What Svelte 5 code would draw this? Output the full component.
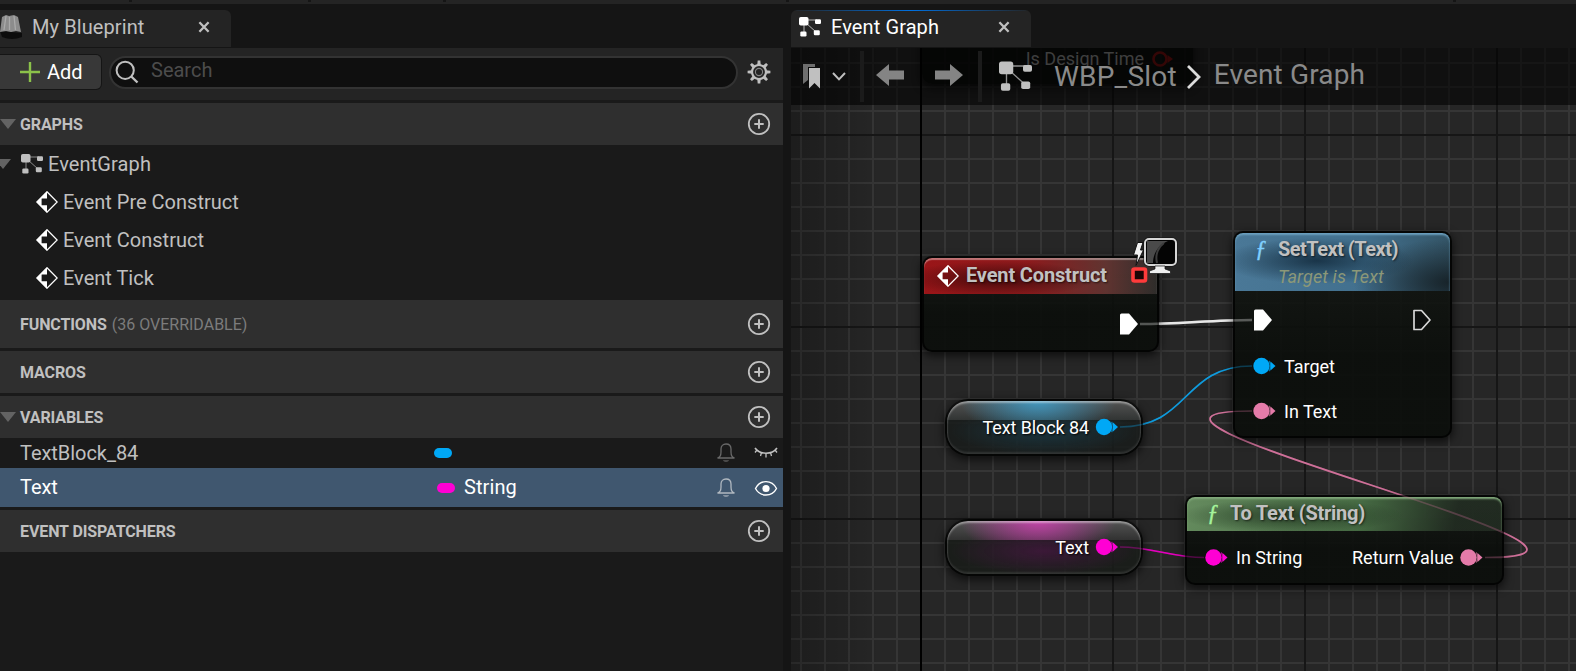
<script lang="ts">
	type Pin = { x: number; y: number; color: string };
	type Node = {
		kind: string;
		x: number;
		y: number;
		w: number;
		h: number;
		title: string;
		subtitle?: string;
	};

	// top left corner of the visible part of the graph
	const originX = 791;
	const originY = 48;

	const events = ['Event Pre Construct', 'Event Construct', 'Event Tick'];

	const nodes: Node[] = [
		{ kind: 'event', x: 922, y: 256, w: 237, h: 96, title: 'Event Construct' },
		{ kind: 'call', x: 1233, y: 231, w: 219, h: 207, title: 'SetText (Text)', subtitle: 'Target is Text' },
		{ kind: 'pure', x: 1185, y: 495, w: 319, h: 90, title: 'To Text (String)' }
	];

	const getters = [
		{ kind: 'object', x: 945, y: 399, title: 'Text Block 84' },
		{ kind: 'string', x: 945, y: 519, title: 'Text' }
	];

	const pins: Pin[] = [
		{ x: 1261.5, y: 366, color: '#00a8f6' },
		{ x: 1261.5, y: 411, color: '#e57ba9' },
		{ x: 1104, y: 427, color: '#00a8f6' },
		{ x: 1104, y: 547, color: '#ff00d4' },
		{ x: 1213.5, y: 557.5, color: '#ff00d4' },
		{ x: 1468.5, y: 557.5, color: '#e57ba9' }
	];

	const labels = [
		{ x: 1284, y: 367, text: 'Target' },
		{ x: 1284, y: 412, text: 'In Text' },
		{ x: 1236, y: 558, text: 'In String' },
		{ x: 1352, y: 558, text: 'Return Value' }
	];

	const place = (x: number, y: number) => `left: ${x - originX}px; top: ${y - originY}px;`;
</script>

{#snippet graphIcon(size: number)}
	<svg class="icon" width={size} height={size} viewBox="0 0 22 22">
		<path d="M5 4H18M5 5V18M7 7L17 16" fill="none" stroke="currentColor" stroke-width="0.9" opacity="0.75" />
		<rect x="0" y="1" width="9.5" height="8.5" rx="1.8" fill="currentColor" />
		<rect x="16" y="3.3" width="6" height="4.6" rx="1.2" fill="currentColor" />
		<rect x="1.3" y="15.5" width="6.2" height="5" rx="1.2" fill="currentColor" />
		<rect x="14.8" y="14.3" width="6" height="5" rx="1.2" fill="currentColor" />
	</svg>
{/snippet}

{#snippet eventIcon()}
	<svg class="icon" width="22" height="22" viewBox="0 0 22 22">
		<path d="M11 .8L21.2 11L11 21.2L.8 11Z" fill="none" stroke="#fff" stroke-width="1.3" />
		<path d="M11 .5V7.6H5.6V14.2H11V21.5L.5 11Z" fill="#fff" />
	</svg>
{/snippet}

{#snippet addIcon()}
	<svg class="icon" width="24" height="24" viewBox="0 0 24 24">
		<circle cx="12" cy="12" r="10.2" fill="none" stroke="#c0c0c0" stroke-width="1.8" />
		<path d="M12 7.3V16.7M7.3 12H16.7" stroke="#c0c0c0" stroke-width="2" />
	</svg>
{/snippet}

{#snippet bellIcon()}
	<svg class="icon" width="20" height="22" viewBox="0 0 20 22">
		<path d="M1.5 16C4 15.5 5 13 5 10V7C5 4 7 2 10 2S15 4 15 7V10C15 13 16 15.5 18.5 16Z" fill="none" stroke="currentColor" stroke-width="1.3" />
		<path d="M7 18H13C12.5 20.8 7.5 20.8 7 18Z" fill="currentColor" opacity=".6" />
	</svg>
{/snippet}

{#snippet header(title: string, note: string, open: boolean, tall: boolean)}
	<div class="section" class:section--tall={tall}>
		<span class="section__arrow" class:section__arrow--open={open}></span>
		<span class="section__title">{title}</span>
		{#if note}<span class="section__note">{note}</span>{/if}
		<button class="plain-btn" title="Add">{@render addIcon()}</button>
	</div>
{/snippet}

{#snippet closeIcon()}
	<svg class="icon" width="12" height="12" viewBox="0 0 12 12">
		<path d="M1.4 1.2L10.6 10.8M10.6 1.2L1.4 10.8" stroke="#c0c0c0" stroke-width="2.3" />
	</svg>
{/snippet}

{#snippet wires(opacity: number)}
	<g fill="none" stroke-width="1.7" {opacity}>
		<path d="M1140 324C1180 324 1212 320 1252 320" stroke="#e8e8e8" stroke-width="2.6" />
		<path d="M1120 427C1190 427 1182 366 1252 366" stroke="#0f9bdd" />
		<path d="M1120 547C1152 547 1172 557.5 1204 557.5" stroke="#e300bd" />
		<path d="M1485 557.5C1694 557.5 1043 411 1252 411" stroke="#cf7199" />
	</g>
{/snippet}

<div class="editor">
	<div class="menu-strip">
		{#each [129, 176, 132, 340, 664] as gap}
			<span class="menu-strip__tick" style="margin-left: {gap}px"></span>
		{/each}
	</div>

	<div class="panes">
		<section class="blueprint">
			<div class="tabs">
				<div class="tab tab--left">
					<svg class="icon tab__map" width="24" height="26" viewBox="0 0 24 26">
						<path d="M0 18L22 20V24Q12 28 2 24Z" fill="#0c0c0c" />
						<path d="M2 4L6 2L9 3L14 2L18 4L21 19L16 18L11 19L6 18L0 19Z" fill="#8c8c8c" />
						<path d="M6 3L4 17M9.500 4V17M14 3L15.500 17" stroke="#b8b8b8" stroke-width="1.300" opacity=".7" />
					</svg>
					<span class="tab__title tab__title--wide">My Blueprint</span>
					{@render closeIcon()}
				</div>
			</div>

			<div class="toolbar">
				<button class="add-btn">
					<svg class="icon" width="20" height="20" viewBox="0 0 20 20">
						<path d="M10 0V20M0 10H20" stroke="#8bc24a" stroke-width="2.4" />
					</svg>
					<span>Add</span>
				</button>
				<div class="search">
					<svg class="icon" width="24" height="24" viewBox="0 0 24 24">
						<circle cx="10.2" cy="10.3" r="8.6" fill="none" stroke="#c0c0c0" stroke-width="2" />
						<path d="M16.3 16.5L22.5 22.5" stroke="#c0c0c0" stroke-width="2.4" />
					</svg>
					<span>Search</span>
				</div>
				<svg class="icon gear" width="24" height="24" viewBox="-12 -12 24 24">
					{#each [0, 45, 90, 135, 180, 225, 270, 315] as angle}
						<path d="M-1.8 -7L-1.3 -11.4H1.3L1.8 -7Z" fill="#c0c0c0" transform="rotate({angle})" />
					{/each}
					<circle r="7" fill="none" stroke="#c0c0c0" stroke-width="2.2" />
					<circle r="3.6" fill="none" stroke="#858585" stroke-width="1.1" />
				</svg>
			</div>

			{@render header('GRAPHS', '', true, false)}
			<div class="tree">
				<div class="tree__row tree__row--root">
					<span class="section__arrow section__arrow--open"></span>
					{@render graphIcon(22)}
					<span>EventGraph</span>
				</div>
				{#each events as name}
					<div class="tree__row">
						{@render eventIcon()}
						<span>{name}</span>
					</div>
				{/each}
			</div>
			{@render header('FUNCTIONS', '(36 OVERRIDABLE)', false, true)}
			{@render header('MACROS', '', false, false)}
			{@render header('VARIABLES', '', true, false)}

			<div class="variable">
				<span class="variable__name">TextBlock_84</span>
				<span class="pill pill--object"></span>
				<span class="variable__type"></span>
				{@render bellIcon()}
				<svg class="icon eye" width="24" height="22" viewBox="0 0 24 22">
					<path d="M1 6C6 13 18 13 23 6" fill="none" stroke="#c0c0c0" stroke-width="1.6" />
					<path d="M3 8L1 10.5M7.5 10.5L6.5 14M12 11.5V15.5M16.5 10.5L17.5 14M21 8L23 10.5" stroke="#c0c0c0" stroke-width="1.3" />
				</svg>
			</div>
			<div class="variable variable--selected">
				<span class="variable__name">Text</span>
				<span class="pill pill--string"></span>
				<span class="variable__type">String</span>
				{@render bellIcon()}
				<svg class="icon eye" width="24" height="22" viewBox="0 0 24 22">
					<path d="M1.5 11.5C6 2.3 18 2.3 22.5 11.5C18 20.2 6 20.2 1.5 11.5Z" fill="none" stroke="#fff" stroke-width="1.4" />
					<circle cx="12" cy="11.5" r="3.6" fill="#fff" />
				</svg>
			</div>
			{@render header('EVENT DISPATCHERS', '', false, false)}
		</section>

		<section class="graph">
			<div class="tabs">
				<div class="tab tab--active">
					{@render graphIcon(22)}
					<span class="tab__title tab__title--wide">Event Graph</span>
					{@render closeIcon()}
				</div>
			</div>

			<div class="canvas">
				<svg class="layer" width="785" height="623" viewBox="791 48 785 623">
					<defs>
						<pattern id="minor" x="920" y="110" width="24" height="24" patternUnits="userSpaceOnUse">
							<path d="M0 0H24V2H2V24H0Z" fill="#353535" />
						</pattern>
						<pattern id="major" x="920" y="134" width="192" height="192" patternUnits="userSpaceOnUse">
							<path d="M0 0H192V2H2V192H0Z" fill="#161616" />
						</pattern>
						<linearGradient id="edge">
							<stop offset="0" stop-color="#000" stop-opacity=".25" />
							<stop offset="1" stop-color="#000" stop-opacity="0" />
						</linearGradient>
					</defs>
					<rect x="791" y="48" width="785" height="623" fill="#262626" />
					<rect x="791" y="48" width="785" height="623" fill="url(#minor)" />
					<rect x="791" y="48" width="785" height="623" fill="url(#major)" />
					<rect x="920" y="48" width="2" height="623" fill="#000" />
					<rect x="791" y="48" width="90" height="623" fill="url(#edge)" />

					{@render wires(1)}
				</svg>

				<div class="ghost" style="{place(922, 28)} width: 271px; height: 56px;">
					<span>Is Design Time</span>
					<svg class="icon" width="24" height="18" viewBox="0 0 24 18">
						<circle cx="9" cy="9" r="6.5" fill="none" stroke="#7c1010" stroke-width="2.6" />
						<path d="M16.5 5L22 9L16.5 13Z" fill="#7c1010" />
					</svg>
				</div>

				{#each nodes as node}
					<div class="node node--{node.kind}" style="{place(node.x, node.y)} width: {node.w}px; height: {node.h}px;">
						<div class="node__header">
							{#if node.kind === 'event'}
								{@render eventIcon()}
							{:else}
								<span class="node__fn">ƒ</span>
							{/if}
							<div class="node__titles">
								<span class="node__title">{node.title}</span>
								{#if node.subtitle}<span class="node__subtitle">{node.subtitle}</span>{/if}
							</div>
						</div>
					</div>
				{/each}

				{#each getters as getter}
					<div class="getter getter--{getter.kind}" style={place(getter.x, getter.y)}>
						<span>{getter.title}</span>
					</div>
				{/each}

				{#each labels as label}
					<span class="label" style={place(label.x, label.y - 12)}>{label.text}</span>
				{/each}

				<svg class="layer" width="785" height="623" viewBox="791 48 785 623">
					{@render wires(0.28)}
					{#each pins as pin}
						<circle cx={pin.x} cy={pin.y} r="8.2" fill={pin.color} />
						<path d="M{pin.x + 9} {pin.y - 4.5}L{pin.x + 14} {pin.y}L{pin.x + 9} {pin.y + 4.5}Z" fill={pin.color} />
						<path d="M{pin.x + 7.5} {pin.y - 5}Q{pin.x + 11} {pin.y} {pin.x + 7.5} {pin.y + 5}" fill="none" stroke={pin.color} stroke-width="1.5" opacity=".6" />
					{/each}
					<path d="M1120 315Q1120 313.5 1121.500 313.5H1129L1138 324L1129 334.500H1120Z" fill="#fff" />
					<path d="M1254 311Q1254 309.500 1255.500 309.500H1263L1272 320L1263 330.500H1254Z" fill="#fff" />
					<path d="M1414 310.500H1421.500L1430 320L1421.500 329.500H1414Z" fill="#0c0e0d" stroke="#d8d8d8" stroke-width="1.7" stroke-linejoin="round" />

					<!-- delegate pin and the client only badge -->
					<rect x="1133" y="269" width="12.500" height="12" rx="1.500" fill="#1c0505" stroke="#ff3b3b" stroke-width="3.6" />
					<path d="M1137.500 242.500H1143L1140.500 250H1143.500L1136 265.500L1137.500 255H1133.500Z" fill="#f2f2f2" stroke="#111" stroke-width="1" />
					<rect x="1143.500" y="237.500" width="34" height="29" rx="5" fill="#111" />
					<rect x="1145" y="239" width="31" height="26" rx="4" fill="#040404" stroke="#d6d6d6" stroke-width="2" />
					<path d="M1147 241H1168C1158 245 1153 254 1153 263H1147Z" fill="#4a4a4a" />
					<path d="M1157 263C1155 255 1158 247 1164 243" fill="none" stroke="#3d3d3d" stroke-width="2" />
					<path d="M1155 266H1165V269L1170.500 271V273.500H1149.500V271L1155 269Z" fill="#f0f0f0" stroke="#111" stroke-width=".7" />
				</svg>

				<div class="crumbs">
					<svg class="icon bookmark" width="18" height="25" viewBox="0 0 18 25">
						<path d="M0 0H12V3H5V16L0 20Z" fill="#6e6e6e" />
						<path d="M6 4H17V24.500L11.500 19L6 24.500Z" fill="#c0c0c0" />
					</svg>
					<svg class="icon chevron" width="14" height="9" viewBox="0 0 14 9">
						<path d="M1 1L7 7.400L13 1" fill="none" stroke="#c0c0c0" stroke-width="2" />
					</svg>
					<span class="divider"></span>
					<svg class="icon arrow" width="28" height="22" viewBox="0 0 28 22">
						<path d="M0 11L13 0V6.500H28V15.500H13V22Z" fill="#848484" />
					</svg>
					<svg class="icon arrow arrow--next" width="28" height="22" viewBox="0 0 28 22">
						<path d="M28 11L15 0V6.500H0V15.500H15V22Z" fill="#848484" />
					</svg>
					<span class="divider divider--second"></span>
					<span class="crumbs__icon">{@render graphIcon(33)}</span>
					<span class="crumbs__text crumbs__text--asset">WBP_Slot</span>
					<svg class="icon crumbs__sep" width="16" height="24" viewBox="0 0 16 24">
						<path d="M2 1L13 12L2 23" fill="none" stroke="#dcdcdc" stroke-width="2.800" />
					</svg>
					<span class="crumbs__text crumbs__text--graph">Event Graph</span>
				</div>
			</div>
		</section>
	</div>
</div>

<style>
	:global(body) {
		background: #151515;
	}

	.editor {
		display: flex;
		flex-direction: column;
		width: 1576px;
		height: 671px;
		overflow: hidden;
		background: #151515;
		color: #c0c0c0;
		font: 20px/24px Roboto, sans-serif;
	}

	.icon {
		display: block;
		flex: none;
	}

	button {
		padding: 0;
		border: 0;
		background: none;
		color: inherit;
		font: inherit;
	}

	.menu-strip {
		display: flex;
		height: 4px;
		background: #242424;
	}

	.menu-strip__tick {
		width: 3px;
		height: 2px;
		background: #151515;
	}

	.panes {
		display: flex;
		flex: 1;
		gap: 8px;
	}

	.blueprint {
		display: flex;
		flex-direction: column;
		width: 783px;
		background: #1a1a1a;
	}

	.graph {
		display: flex;
		flex-direction: column;
		flex: 1;
	}

	.tabs {
		display: flex;
		height: 44px;
		box-sizing: border-box;
		padding-top: 6px;
		background: #151515;
	}

	.tab {
		display: flex;
		align-items: center;
		box-sizing: border-box;
		height: 37px;
		padding-bottom: 3px;
		border-radius: 0 6px 0 0;
		background: #242424;
	}

	.tab--left {
		width: 231px;
		padding-right: 21px;
		gap: 8px;
	}

	.tab--active {
		width: 240px;
		padding: 0 21px 3px 8px;
		gap: 10px;
		border-radius: 6px 6px 0 0;
		background: linear-gradient(90deg, #242424, #0070e0 50%, #242424) 0 0 / 100% 1px no-repeat, #242424;
		color: #fff;
	}

	.tab__title {
		flex: 1;
	}

	.tab__title--wide {
		letter-spacing: 0.1px;
	}

	.tab__map {
		margin-top: -3px;
	}

	.toolbar {
		display: flex;
		box-sizing: border-box;
		height: 52px;
		margin-bottom: 3px;
		padding-top: 7px;
		background: #242424;
	}

	.add-btn {
		display: flex;
		align-items: center;
		gap: 7px;
		width: 101px;
		height: 34px;
		padding-left: 20px;
		border-radius: 0 5px 5px 0;
		background: #383838;
		box-shadow: 0 0 0 1px #151515;
		color: #fff;
	}

	.search {
		display: flex;
		gap: 12px;
		box-sizing: border-box;
		width: 629px;
		height: 33px;
		margin: 1px 0 0 8px;
		padding: 2px 4px;
		border: 2px solid #333;
		border-radius: 17px;
		background: #0f0f0f;
		color: #4c4c4c;
		line-height: 20px;
	}

	.gear {
		margin: 5px 0 0 9px;
	}

	.section {
		display: flex;
		align-items: center;
		flex: none;
		box-sizing: border-box;
		height: 42px;
		margin-bottom: 3px;
		padding-right: 12px;
		background: #2f2f2f;
		font-size: 16px;
	}

	.section--tall {
		height: 48px;
	}

	.section:has(.section__arrow--open) {
		margin-bottom: 0;
	}

	.section__arrow {
		width: 20px;
	}

	.section__arrow--open::before {
		content: '';
		display: block;
		width: 16px;
		height: 10px;
		background: #636363;
		clip-path: polygon(0 0, 100% 0, 50% 100%);
	}

	.section__title,
	.section__note {
		padding-top: 2px;
		letter-spacing: -0.1px;
	}

	.section__title {
		font-weight: 700;
	}

	.section__note {
		margin-left: 5px;
		color: #7c7c7c;
		letter-spacing: 0;
	}

	.plain-btn {
		margin-left: auto;
	}

	.tree {
		padding-bottom: 3px;
	}

	.tree__row {
		display: flex;
		align-items: center;
		gap: 5px;
		height: 38px;
		padding-left: 36px;
	}

	.tree__row--root {
		padding-left: 0;
		letter-spacing: 0.1px;
	}

	.tree__row--root .section__arrow {
		width: 21px;
		margin-left: -5px;
	}

	.variable {
		display: flex;
		align-items: center;
		box-sizing: border-box;
		height: 30px;
		padding: 0 5px 0 20px;
		color: #c0c0c0;
	}

	.variable > .icon {
		color: #696969;
	}

	.variable--selected {
		height: 39px;
		margin-bottom: 3px;
		background: #40576f;
		color: #fff;
	}

	.variable--selected > .icon {
		color: #b0b8c0;
		margin-top: 1px;
	}

	.variable__name {
		width: 414px;
		letter-spacing: -0.05px;
	}

	.variable--selected .variable__name {
		width: 417px;
		padding-bottom: 2px;
	}

	.variable__type {
		flex: 1;
		margin-left: 9px;
		padding-bottom: 2px;
		letter-spacing: 0.1px;
	}

	.pill {
		width: 18px;
		height: 10px;
		border-radius: 5px;
	}

	.pill--object {
		background: #00a8f6;
	}

	.pill--string {
		background: #ff00d4;
	}

	.eye {
		margin-left: 18px;
	}

	.canvas {
		position: relative;
		flex: 1;
		overflow: hidden;
	}

	.layer {
		position: absolute;
		top: 0;
		left: 0;
	}

	.node,
	.getter,
	.ghost,
	.label {
		position: absolute;
		box-sizing: border-box;
	}

	.node {
		padding: 2px;
		border-radius: 10px;
		background: linear-gradient(rgba(20, 24, 20, 0.85), rgba(11, 14, 11, 0.93) 60%);
		box-shadow: inset 0 0 0 2px rgba(0, 0, 0, 0.75), 0 3px 9px 1px rgba(0, 0, 0, 0.6);
	}

	.node__header {
		display: flex;
		box-sizing: border-box;
		height: 36px;
		border-radius: 8px 8px 0 0;
		box-shadow: inset 0 2px 1px rgba(255, 255, 255, 0.2);
	}

	.node__titles {
		display: flex;
		flex-direction: column;
	}

	.node__title {
		color: #c1c1c1;
		font-weight: 700;
		letter-spacing: -0.15px;
		text-shadow: 1px 1px 2px rgba(0, 0, 0, 0.6);
	}

	.node__subtitle {
		color: #8c9878;
		font-size: 18px;
		font-style: italic;
		letter-spacing: 0.1px;
	}

	.node__fn {
		width: 23px;
		color: #80d0ff;
		font: italic 400 23px/24px 'Liberation Serif', serif;
		-webkit-text-stroke: 0.4px currentColor;
	}

	.node--event .node__header {
		gap: 7px;
		padding: 7px 0 0 13px;
		background:
			radial-gradient(ellipse 42% 50% at 32% 58%, rgba(20, 0, 0, 0.62), rgba(20, 0, 0, 0)),
			linear-gradient(90deg, #9a1518, #8d1b1d 45%, rgba(105, 55, 52, 0.9) 78%, rgba(50, 48, 46, 0.9));
		box-shadow: inset 0 2px 1px rgba(255, 255, 255, 0.4);
	}

	.node--event .node__title {
		margin-top: -2px;
	}

	.node--call .node__header {
		height: 58px;
		padding: 4px 0 0 20px;
		background:
			radial-gradient(ellipse 45% 40% at 38% 48%, rgba(18, 42, 60, 0.85), rgba(18, 42, 60, 0)),
			radial-gradient(ellipse 45% 75% at 100% 85%, rgba(18, 26, 30, 0.85), rgba(18, 26, 30, 0)),
			linear-gradient(90deg, #4a7897, #42708e 60%, #345567);
		box-shadow: inset 0 2px 2px #6b9fbe;
	}

	.node--call .node__title {
		letter-spacing: -0.53px;
	}

	.node--call .node__titles {
		gap: 4px;
	}

	.node--pure .node__header {
		height: 34px;
		padding: 4px 0 0 20px;
		background:
			radial-gradient(ellipse 36% 50% at 33% 55%, rgba(30, 48, 30, 0.75), rgba(30, 48, 30, 0)),
			linear-gradient(100deg, rgba(105, 145, 98, 0.95), rgba(75, 115, 72, 0.9) 55%, rgba(38, 50, 38, 0.75) 85%);
		box-shadow: inset 0 2px 2px #82a97c;
	}

	.node--pure .node__title {
		letter-spacing: -0.25px;
	}

	.node--pure .node__fn {
		color: #a5f39b;
	}

	.getter {
		display: flex;
		align-items: center;
		justify-content: flex-end;
		width: 198px;
		height: 57px;
		padding: 1px 52px 0 0;
		border: 2px solid rgba(0, 0, 0, 0.8);
		border-radius: 23px;
		box-shadow:
			inset 0 2px 2px rgba(255, 255, 255, 0.42),
			inset 0 -2px 2px rgba(120, 120, 120, 0.25),
			0 3px 8px 1px rgba(0, 0, 0, 0.6);
		color: #fff;
		font-size: 18px;
		letter-spacing: -0.1px;
		text-shadow: 1px 1px 2px #000;
	}

	.getter--object {
		background:
			radial-gradient(ellipse 40% 38px at 47% 0, rgba(62, 169, 218, 0.8), rgba(62, 169, 218, 0)) 0 0 / 100% 19px no-repeat,
			linear-gradient(rgba(90, 90, 90, 0.9), rgba(52, 55, 54, 0.9)) 0 0 / 100% 19px no-repeat,
			radial-gradient(ellipse 48% 24px at 50% 30px, rgba(25, 75, 95, 0.5), rgba(25, 75, 95, 0)),
			rgba(25, 28, 27, 0.88);
	}

	.getter--string {
		background:
			radial-gradient(ellipse 40% 38px at 47% 0, rgba(222, 63, 189, 0.8), rgba(222, 63, 189, 0)) 0 0 / 100% 19px no-repeat,
			linear-gradient(rgba(90, 90, 90, 0.9), rgba(52, 52, 52, 0.9)) 0 0 / 100% 19px no-repeat,
			radial-gradient(ellipse 48% 24px at 50% 30px, rgba(92, 20, 85, 0.5), rgba(92, 20, 85, 0)),
			rgba(25, 28, 25, 0.88);
	}

	.label {
		color: #fff;
		font-size: 18px;
		white-space: nowrap;
	}

	.ghost {
		display: flex;
		align-items: center;
		justify-content: flex-end;
		gap: 7px;
		padding: 6px 18px 0 0;
		border-radius: 10px;
		background: rgba(10, 12, 10, 0.85);
		box-shadow: 0 3px 9px 1px rgba(0, 0, 0, 0.6);
		color: #949494;
		font-size: 18px;
	}

	.crumbs {
		position: absolute;
		top: 0;
		left: 0;
		display: flex;
		box-sizing: border-box;
		width: 785px;
		height: 57px;
		padding: 3px 0 0 12px;
		background: rgba(0, 0, 0, 0.58);
		color: #c0c0c0;
	}

	.bookmark {
		margin-top: 13px;
	}

	.chevron {
		margin: 21px 0 0 11px;
	}

	.divider {
		width: 4px;
		height: 51px;
		margin: 0 12px 0 14px;
		background: #1b1b1b;
	}

	.divider--second {
		margin: 0 17px 0 15px;
	}

	.arrow {
		margin: 13px 0 0;
	}

	.arrow--next {
		margin-left: 31px;
	}

	.crumbs__icon {
		margin-top: 9px;
	}

	.crumbs__text {
		color: #8a8a8a;
		font-size: 28px;
		line-height: 32px;
		padding-top: 8px;
	}

	.crumbs__text--asset {
		margin-left: 22px;
		padding-top: 10px;
		letter-spacing: 0.2px;
	}

	.crumbs__text--graph {
		letter-spacing: 0.15px;
	}

	.crumbs__sep {
		margin: 14px 12px 0 9px;
	}
</style>
